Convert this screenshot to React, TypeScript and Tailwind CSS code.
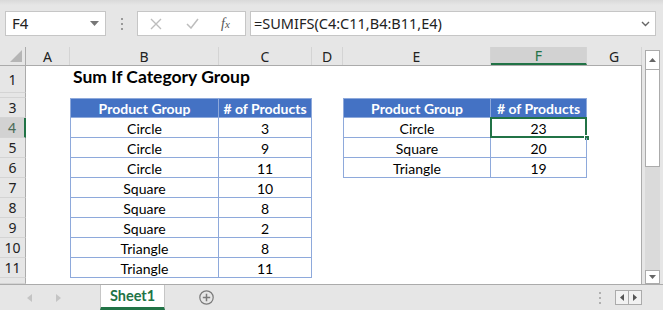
import React from 'react';

const cols = [
  { key: 'A', w: 44 },
  { key: 'B', w: 149 },
  { key: 'C', w: 93 },
  { key: 'D', w: 31 },
  { key: 'E', w: 148 },
  { key: 'F', w: 96 },
  { key: 'G', w: 55 },
];

const left = [
  ['Circle', '3'],
  ['Circle', '9'],
  ['Circle', '11'],
  ['Square', '10'],
  ['Square', '8'],
  ['Square', '2'],
  ['Triangle', '8'],
  ['Triangle', '11'],
];

const right = [
  ['Circle', '23'],
  ['Square', '20'],
  ['Triangle', '19'],
];

const rows = [
  { n: '1', h: 27 },
  { n: '', h: 5 },
  { n: '3', h: 20 },
  { n: '4', h: 20 },
  { n: '5', h: 20 },
  { n: '6', h: 20 },
  { n: '7', h: 20 },
  { n: '8', h: 20 },
  { n: '9', h: 20 },
  { n: '10', h: 20 },
  { n: '11', h: 20 },
  { n: '', h: 6 },
];

const cellFont = { fontFamily: 'Lato, "Open Sans", sans-serif' };

const Toolbar: React.FC = () => (
  <div className="h-[47px] shrink-0 flex items-center pl-[5px] pr-[7px] bg-[linear-gradient(#d9d9d9_0px,#e6e6e6_5px)]">
    <div className="w-[101px] h-[25px] bg-white border border-[#c6c6c6] flex items-center justify-between pl-[6px] pr-[6px]">
      <span className="text-[15px] text-[#222]">F4</span>
      <svg width="9" height="5" viewBox="0 0 9 5"><path d="M0 0h9L4.5 5z" fill="#777" /></svg>
    </div>
    <div className="w-[31px] flex flex-col items-center gap-[3px]">
      <span className="w-[2px] h-[2px] bg-[#999]" />
      <span className="w-[2px] h-[2px] bg-[#999]" />
      <span className="w-[2px] h-[2px] bg-[#999]" />
    </div>
    <div className="w-[109px] h-[25px] bg-white border border-[#c6c6c6] flex items-center pl-[12px]">
      <svg width="12" height="12" viewBox="0 0 12 12"><path d="M1 1l10 10M11 1L1 11" stroke="#bdbdbd" strokeWidth="1.4" /></svg>
      <svg className="ml-[24px]" width="13" height="11" viewBox="0 0 13 11"><path d="M1 6l4 4 7-9" stroke="#bdbdbd" strokeWidth="1.5" fill="none" /></svg>
      <span className="ml-[22px] text-[14px] italic text-[#555]" style={{ fontFamily: '"Liberation Serif", serif' }}>
        f<span className="text-[11px]">x</span>
      </span>
    </div>
    <div className="ml-[4px] flex-1 h-[25px] bg-white border border-[#c6c6c6] flex items-center justify-between pl-[3px] pr-[5px]">
      <span className="text-[14.5px] text-[#222]">=SUMIFS(C4:C11,B4:B11,E4)</span>
      <svg width="9" height="6" viewBox="0 0 9 6"><path d="M1 1l3.5 3.5L8 1" stroke="#666" strokeWidth="1.4" fill="none" /></svg>
    </div>
  </div>
);

const TableCell: React.FC<{ children: React.ReactNode; head?: boolean; first?: boolean; w: number }> = ({ children, head, first, w }) => (
  <div
    style={{ width: w, ...cellFont }}
    className={
      'shrink-0 h-full flex items-center justify-center border-r border-b border-[#8ea9db] text-[14px] pt-[1px] ' +
      (first ? 'border-l ' : '') +
      (head ? 'bg-[#4472c4] text-white font-bold border-t' : 'text-black')
    }
  >
    {children}
  </div>
);

const Blank: React.FC<{ w: number }> = ({ w }) => <div style={{ width: w }} className="shrink-0 h-full" />;

const Grid: React.FC = () => (
  <div className="w-[642px] flex flex-col bg-white border-r border-[#ababab]">
    <div className="h-[19px] flex shrink-0 bg-[#e6e6e6] border-b border-[#ababab]">
      <div className="w-[26px] shrink-0 border-r border-[#ababab] flex items-end justify-end pr-[3px] pb-[3px]">
        <svg width="12" height="12" viewBox="0 0 12 12"><path d="M12 0v12H0z" fill="#b5b5b5" /></svg>
      </div>
      {cols.map((c) => (
        <div
          key={c.key}
          style={{ width: c.w }}
          className={
            'shrink-0 flex items-center justify-center text-[14px] border-r border-[#d4d4d4] ' +
            (c.key === 'F' ? 'bg-[#d2d2d2] text-[#217346] border-b-2 border-b-[#217346]' : 'text-[#222]')
          }
        >
          {c.key}
        </div>
      ))}
    </div>
    {rows.map((r, i) => {
      const sel = r.n === '4';
      const idx = i - 2;
      return (
        <div key={i} className="flex shrink-0" style={{ height: r.h }}>
          <div
            className={
              'w-[26px] shrink-0 flex items-center justify-center text-[14px] border-b border-[#d4d4d4] ' +
              (sel ? 'bg-[#d2d2d2] text-[#4a6b56] border-r-2 border-r-[#217346]' : 'bg-[#e6e6e6] text-[#222] border-r border-r-[#ababab]')
            }
          >
            {r.n}
          </div>
          <Blank w={44} />
          {r.n === '1' && (
            <div className="w-[149px] shrink-0 flex items-end pl-[3px] pb-[3px] text-[17.5px] font-bold text-black whitespace-nowrap" style={cellFont}>
              Sum If Category Group
            </div>
          )}
          {r.n === '1' && <Blank w={93} />}
          {idx === 0 && (
            <>
              <TableCell w={149} head first>Product Group</TableCell>
              <TableCell w={93} head># of Products</TableCell>
            </>
          )}
          {idx >= 1 && idx <= 8 && (
            <>
              <TableCell w={149} first>{left[idx - 1][0]}</TableCell>
              <TableCell w={93}>{left[idx - 1][1]}</TableCell>
            </>
          )}
          {(r.n === '' ) && <Blank w={242} />}
          <Blank w={31} />
          {idx === 0 && (
            <>
              <TableCell w={148} head first>Product Group</TableCell>
              <TableCell w={96} head># of Products</TableCell>
            </>
          )}
          {idx >= 1 && idx <= 3 && (
            <>
              <TableCell w={148} first>{right[idx - 1][0]}</TableCell>
              <div className="relative shrink-0 h-full" style={{ width: 96 }}>
                <TableCell w={96}>{right[idx - 1][1]}</TableCell>
                {idx === 1 && (
                  <>
                    <div className="absolute -left-[1px] -top-[1px] w-[97px] h-[21px] border-2 border-[#217346]" />
                    <div className="absolute -right-[3px] -bottom-[3px] w-[6px] h-[6px] bg-[#217346] border border-white" />
                  </>
                )}
              </div>
            </>
          )}
        </div>
      );
    })}
  </div>
);

const Scrollbar: React.FC = () => (
  <div className="w-[21px] flex flex-col items-center pt-[3px] bg-[#e6e6e6]">
    <div className="w-[15px] h-[20px] bg-white border border-[#ababab] flex items-center justify-center">
      <svg width="7" height="4" viewBox="0 0 7 4"><path d="M0 4h7L3.5 0z" fill="#666" /></svg>
    </div>
    <div className="w-[15px] flex-1 bg-[#dadada] flex flex-col">
      <div className="h-[97px] bg-white border border-t-0 border-[#ababab]" />
    </div>
    <div className="w-[15px] h-[14px] bg-white border border-[#ababab] flex items-center justify-center">
      <svg width="7" height="4" viewBox="0 0 7 4"><path d="M0 0h7L3.5 4z" fill="#666" /></svg>
    </div>
  </div>
);

const BottomBar: React.FC = () => (
  <div className="h-[26px] shrink-0 flex items-start border-t border-[#ababab] bg-[#e6e6e6]">
    <div className="w-[100px] h-full flex items-center pl-[27px] gap-[24px]">
      <svg width="5" height="8" viewBox="0 0 5 8"><path d="M5 0v8L0 4z" fill="#c4c4c4" /></svg>
      <svg width="5" height="8" viewBox="0 0 5 8"><path d="M0 0v8l5-4z" fill="#c4c4c4" /></svg>
    </div>
    <div className="w-[65px] h-[25px] bg-white border-x border-[#c6c6c6] border-b-[3px] border-b-[#217346] flex items-center justify-center">
      <span className="text-[14.5px] font-bold text-[#217346]" style={cellFont}>Sheet1</span>
    </div>
    <div className="h-full flex items-center pl-[34px]">
      <svg width="15" height="15" viewBox="0 0 15 15">
        <circle cx="7.5" cy="7.5" r="6.7" stroke="#7a7a7a" strokeWidth="1.2" fill="none" />
        <path d="M7.5 3.8v7.4M3.8 7.5h7.4" stroke="#7a7a7a" strokeWidth="1.5" />
      </svg>
    </div>
    <div className="flex-1" />
    <div className="h-full flex flex-col justify-center gap-[3px] pr-[14px]">
      <span className="w-[2px] h-[2px] bg-[#b0b0b0]" />
      <span className="w-[2px] h-[2px] bg-[#b0b0b0]" />
      <span className="w-[2px] h-[2px] bg-[#b0b0b0]" />
    </div>
    <div className="h-full flex items-center pr-[21px]">
      <div className="flex h-[15px] border border-[#ababab] bg-[#f2f2f2]">
        <div className="w-[13px] flex items-center justify-center border-r border-[#ababab]">
          <svg width="4" height="7" viewBox="0 0 4 7"><path d="M4 0v7L0 3.5z" fill="#555" /></svg>
        </div>
        <div className="w-[12px] flex items-center justify-center">
          <svg width="4" height="7" viewBox="0 0 4 7"><path d="M0 0v7l4-3.5z" fill="#555" /></svg>
        </div>
      </div>
    </div>
  </div>
);

const App: React.FC = () => (
  <div className="w-[663px] h-[310px] overflow-hidden flex flex-col bg-[#e6e6e6]" style={{ fontFamily: '"Noto Sans", "Open Sans", sans-serif' }}>
    <Toolbar />
    <div className="flex h-[237px] shrink-0">
      <Grid />
      <Scrollbar />
    </div>
    <BottomBar />
  </div>
);

export default App;
